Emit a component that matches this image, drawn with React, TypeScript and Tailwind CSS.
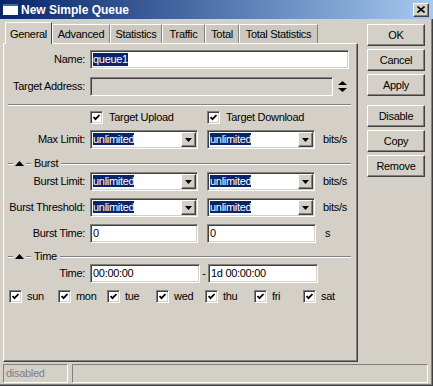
import React from "react";

const sunken =
  "border border-t-[#808080] border-l-[#808080] border-b-white border-r-white shadow-[inset_1px_1px_0_#404040,inset_-1px_-1px_0_#d4d0c8]";
const raised =
  "border border-t-white border-l-white border-b-[#404040] border-r-[#404040] shadow-[inset_-1px_-1px_0_#808080]";

function Sel({ children }: { children: React.ReactNode }) {
  return <span className="bg-[#0a246a] text-white leading-[13px]">{children}</span>;
}

function Label({ children }: { children: React.ReactNode }) {
  return <div className="w-[81px] text-right whitespace-nowrap">{children}</div>;
}

function Combo() {
  return (
    <div className={`${sunken} bg-white h-[19px] w-[108px] flex items-center p-[1px]`}>
      <div className="flex-1 pl-[1px]">
        <Sel>unlimited</Sel>
      </div>
      <div className={`${raised} bg-[#d4d0c8] w-[15px] h-full flex items-center justify-center`}>
        <svg width="7" height="4" viewBox="0 0 7 4">
          <path d="M0 0h7L3.5 4z" fill="#000" />
        </svg>
      </div>
    </div>
  );
}

function Field({ className, children }: { className: string; children?: React.ReactNode }) {
  return (
    <div className={`${sunken} h-[19px] flex items-center pl-[2px] whitespace-nowrap ${className}`}>
      {children}
    </div>
  );
}

function Check() {
  return (
    <div className={`${sunken} bg-white w-[13px] h-[13px] shrink-0 flex items-center justify-center`}>
      <svg width="7" height="7" viewBox="0 0 7 7">
        <path d="M0.5 3L2.5 5.2L6.5 1" stroke="#000" strokeWidth="1.8" fill="none" />
      </svg>
    </div>
  );
}

function Section({ title }: { title: string }) {
  return (
    <div className="flex items-center h-[13px]">
      <div className="ml-[4px] w-[5px] border-t border-t-[#808080] border-b border-b-white" />
      <svg width="9" height="5" viewBox="0 0 9 5" className="ml-[2px]">
        <path d="M0 5L4.5 0L9 5z" fill="#000" />
      </svg>
      <div className="ml-[2px] w-[5px] border-t border-t-[#808080] border-b border-b-white" />
      <span className="ml-[3px]">{title}</span>
      <div className="ml-[3px] flex-1 mr-[6px] border-t border-t-[#808080] border-b border-b-white" />
    </div>
  );
}

function Btn({ label, className }: { label: string; className: string }) {
  return (
    <div className={`${raised} h-[22px] w-[58px] flex items-center justify-center ${className}`}>
      {label}
    </div>
  );
}

const tabs = [
  { name: "Advanced", w: "w-[58px]" },
  { name: "Statistics", w: "w-[52px]" },
  { name: "Traffic", w: "w-[43px]" },
  { name: "Total", w: "w-[34px]" },
  { name: "Total Statistics", w: "w-[79px]" },
];

const days = ["sun", "mon", "tue", "wed", "thu", "fri", "sat"];

export default function App() {
  return (
    <div className="w-[433px] h-[386px] bg-[#d4d0c8] flex flex-col text-[11px] tracking-[-0.3px] text-black font-['Liberation_Sans',Arial,sans-serif] shadow-[inset_-1px_-1px_0_#404040,inset_-2px_-2px_0_#808080] overflow-hidden">
      {/* title bar */}
      <div className="h-[19px] flex items-center bg-gradient-to-r from-[#0a246a] to-[#a6caf0] pr-[4px]">
        <div className="ml-[3px] w-[15px] h-[11px] bg-white border-t-2 border-[#3a6ea5]" />
        <span className="ml-[3px] text-white font-bold text-[12px] tracking-normal">New Simple Queue</span>
        <div className={`${raised} bg-[#d4d0c8] ml-auto w-[16px] h-[14px] flex items-center justify-center`}>
          <svg width="8" height="7" viewBox="0 0 8 7">
            <path d="M0.5 0.5L7.5 6.5M7.5 0.5L0.5 6.5" stroke="#000" strokeWidth="1.6" />
          </svg>
        </div>
      </div>

      <div className="flex pl-[3px] h-[343px]">
        {/* left: tabs + panel */}
        <div className="w-[355px] flex flex-col">
          <div className="mt-[3px] h-[21px] flex items-end pl-[2px]">
            <div className="relative z-10 -mb-[1px] h-[22px] w-[47px] bg-[#d4d0c8] border-t border-l border-t-white border-l-white border-r border-r-[#404040] flex items-start justify-center pt-[3px]">
              General
            </div>
            {tabs.map((t) => (
              <div
                key={t.name}
                className={`${t.w} h-[19px] bg-[#ccc8c0] border-t border-l border-t-white border-l-white border-r border-r-[#808080] flex items-center justify-center whitespace-nowrap`}
              >
                {t.name}
              </div>
            ))}
          </div>

          <div className={`${raised} h-[319px] flex flex-col`}>
            <div className="flex items-center mt-[6px]">
              <Label>Name:</Label>
              <Field className="ml-[5px] w-[259px] bg-white">
                <Sel>queue1</Sel>
              </Field>
            </div>

            <div className="flex items-center mt-[8px]">
              <Label>Target Address:</Label>
              <Field className="ml-[5px] w-[243px] bg-[#d4d0c8]" />
              <svg width="9" height="11" viewBox="0 0 9 11" className="ml-[5px]">
                <path d="M0 4L4.5 0L9 4z M0 7L9 7L4.5 11z" fill="#000" />
              </svg>
            </div>

            <div className="mt-[8px] ml-[4px] w-[343px] border-t border-t-[#808080] border-b border-b-white" />

            <div className="flex items-center mt-[5px] pl-[86px] h-[13px]">
              <div className="w-[117px] flex items-center gap-[6px]">
                <Check />
                <span>Target Upload</span>
              </div>
              <div className="flex items-center gap-[6px]">
                <Check />
                <span>Target Download</span>
              </div>
            </div>

            <div className="flex items-center mt-[6px]">
              <Label>Max Limit:</Label>
              <div className="ml-[5px] flex items-center gap-[9px]">
                <Combo />
                <Combo />
              </div>
              <span className="ml-[8px]">bits/s</span>
            </div>

            <div className="mt-[8px]">
              <Section title="Burst" />
            </div>

            <div className="flex items-center mt-[2px]">
              <Label>Burst Limit:</Label>
              <div className="ml-[5px] flex items-center gap-[9px]">
                <Combo />
                <Combo />
              </div>
              <span className="ml-[8px]">bits/s</span>
            </div>

            <div className="flex items-center mt-[7px]">
              <Label>Burst Threshold:</Label>
              <div className="ml-[5px] flex items-center gap-[9px]">
                <Combo />
                <Combo />
              </div>
              <span className="ml-[8px]">bits/s</span>
            </div>

            <div className="flex items-center mt-[7px]">
              <Label>Burst Time:</Label>
              <Field className="ml-[5px] w-[108px] bg-white">0</Field>
              <Field className="ml-[9px] w-[109px] bg-white">0</Field>
              <span className="ml-[9px]">s</span>
            </div>

            <div className="mt-[7px]">
              <Section title="Time" />
            </div>

            <div className="flex items-center mt-[1px]">
              <Label>Time:</Label>
              <Field className="ml-[5px] w-[110px] bg-white">00:00:00</Field>
              <span className="w-[8px] text-center">-</span>
              <Field className="w-[110px] bg-white">1d 00:00:00</Field>
            </div>

            <div className="flex items-center mt-[7px] pl-[5px] h-[13px]">
              {days.map((d) => (
                <div key={d} className="w-[49px] flex items-center gap-[5px]">
                  <Check />
                  <span>{d}</span>
                </div>
              ))}
            </div>
          </div>
        </div>

        {/* right: buttons */}
        <div className="ml-[9px] flex flex-col pt-[5px]">
          <Btn label="OK" className="" />
          <Btn label="Cancel" className="mt-[3px]" />
          <Btn label="Apply" className="mt-[3px]" />
          <Btn label="Disable" className="mt-[9px]" />
          <Btn label="Copy" className="mt-[3px]" />
          <Btn label="Remove" className="mt-[3px]" />
        </div>
      </div>

      {/* status bar */}
      <div className="mt-[2px] h-[19px] flex gap-[4px] pl-[3px] pr-[5px]">
        <div className="w-[65px] h-full border border-t-[#808080] border-l-[#808080] border-b-white border-r-white text-[#808080] pl-[2px] flex items-center">
          disabled
        </div>
        <div className="flex-1 h-full border border-t-[#808080] border-l-[#808080] border-b-white border-r-white" />
      </div>
    </div>
  );
}
